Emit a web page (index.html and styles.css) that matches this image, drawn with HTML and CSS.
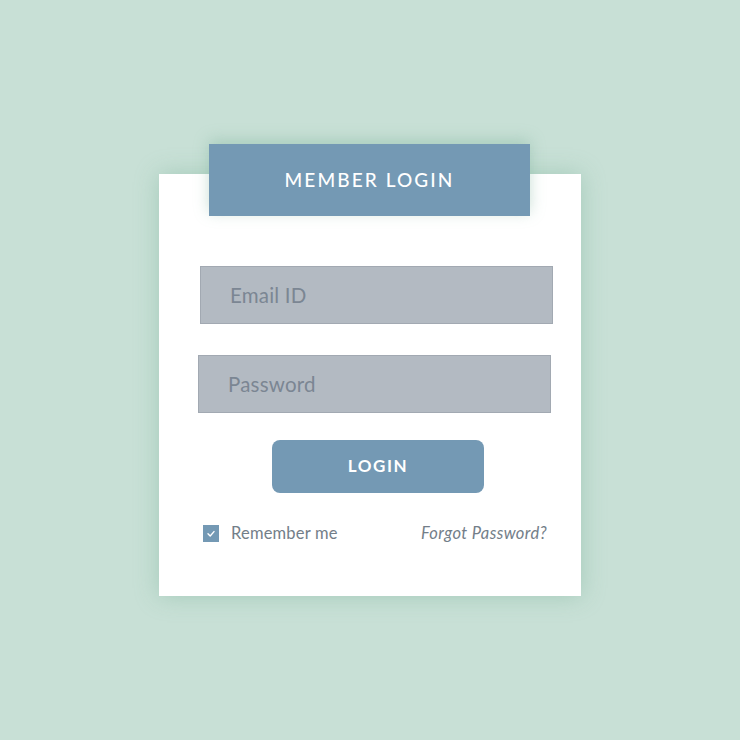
FILE: index.html
```html
<!DOCTYPE html>
<html>
<head>
<meta charset="utf-8">
<link rel="stylesheet" href="styles.css">
</head>
<body>
<div class="page">
  <div class="card">
    <div class="banner">MEMBER LOGIN</div>
    <div class="field field-email">Email ID</div>
    <div class="field field-pass">Password</div>
    <div class="btn">LOGIN</div>
    <div class="row">
      <div class="remember">
        <span class="check"><svg width="16" height="17" viewBox="0 0 16 17"><path d="M5 8.8 L7.2 11 L11 6.6" fill="none" stroke="#ffffff" stroke-width="1.4" stroke-linecap="round" stroke-linejoin="round"/></svg></span>
        <span>Remember me</span>
      </div>
      <div class="forgot">Forgot Password?</div>
    </div>
  </div>
</div>
</body>
</html>
```
FILE: styles.css
```css
html, body {
  margin: 0;
  padding: 0;
}
body {
  background: #c8e0d6;
  font-family: Lato, "Open Sans", sans-serif;
}
.page {
  width: 740px;
  height: 740px;
  display: flex;
  justify-content: flex-start;
  align-items: flex-start;
}
.card {
  margin: 174px 0 0 159px;
  width: 422px;
  height: 422px;
  background: #ffffff;
  box-shadow: 0 0 22px rgba(120, 175, 150, 0.45);
  display: flex;
  flex-direction: column;
  box-sizing: border-box;
}
.banner {
  margin: -30px 0 0 50px;
  width: 321px;
  height: 72px;
  background: #7499b4;
  color: #ffffff;
  font-size: 19px;
  font-weight: 500;
  letter-spacing: 2.1px;
  display: flex;
  align-items: center;
  justify-content: center;
  padding-bottom: 1px;
  box-sizing: border-box;
  box-shadow: 0 -4px 14px rgba(120, 175, 150, 0.4);
}
.field {
  height: 58px;
  width: 353px;
  box-sizing: border-box;
  background: #b3bac2;
  border: 1px solid #a2a9b2;
  color: #7b8693;
  font-size: 20.5px;
  letter-spacing: 0.2px;
  display: flex;
  align-items: center;
  padding-left: 29px;
}
.field-email {
  margin: 50px 0 0 41px;
}
.field-pass {
  margin: 31px 0 0 39px;
  height: 58px;
}
.btn {
  margin: 27px 0 0 113px;
  width: 212px;
  height: 53px;
  border-radius: 8px;
  background: #7499b4;
  color: #ffffff;
  font-size: 17px;
  font-weight: 700;
  letter-spacing: 1.6px;
  display: flex;
  align-items: center;
  justify-content: center;
  padding-bottom: 2px;
  box-sizing: border-box;
}
.row {
  margin: 30px 34px 0 44px;
  display: flex;
  justify-content: space-between;
  align-items: center;
  color: #737e89;
  font-size: 16.5px;
  letter-spacing: 0.2px;
}
.remember {
  display: flex;
  align-items: center;
  gap: 12px;
}
.check {
  width: 16px;
  height: 17px;
  background: #7499b4;
  display: flex;
}
.forgot {
  font-style: italic;
  letter-spacing: 0.4px;
}
```
